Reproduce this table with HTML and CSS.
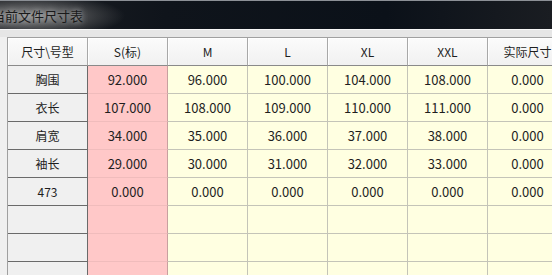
FILE: index.html
```html
<!DOCTYPE html>
<html lang="zh">
<head>
<meta charset="utf-8">
<link rel="stylesheet" href="styles.css">
</head>
<body>
<div class="window">
  <div class="titlebar"><span class="title">当前文件尺寸表</span></div>
  <div class="toolband"></div>
  <div class="content">
    <div class="grid">
      <div class="hd">尺寸\号型</div>
      <div class="hd">S(标)</div>
      <div class="hd">M</div>
      <div class="hd">L</div>
      <div class="hd">XL</div>
      <div class="hd">XXL</div>
      <div class="hd">实际尺寸</div>

      <div class="rh">胸围</div>
      <div class="c s">92.000</div>
      <div class="c">96.000</div>
      <div class="c">100.000</div>
      <div class="c">104.000</div>
      <div class="c">108.000</div>
      <div class="c">0.000</div>

      <div class="rh">衣长</div>
      <div class="c s">107.000</div>
      <div class="c">108.000</div>
      <div class="c">109.000</div>
      <div class="c">110.000</div>
      <div class="c">111.000</div>
      <div class="c">0.000</div>

      <div class="rh">肩宽</div>
      <div class="c s">34.000</div>
      <div class="c">35.000</div>
      <div class="c">36.000</div>
      <div class="c">37.000</div>
      <div class="c">38.000</div>
      <div class="c">0.000</div>

      <div class="rh">袖长</div>
      <div class="c s">29.000</div>
      <div class="c">30.000</div>
      <div class="c">31.000</div>
      <div class="c">32.000</div>
      <div class="c">33.000</div>
      <div class="c">0.000</div>

      <div class="rh">473</div>
      <div class="c s">0.000</div>
      <div class="c">0.000</div>
      <div class="c">0.000</div>
      <div class="c">0.000</div>
      <div class="c">0.000</div>
      <div class="c">0.000</div>

      <div class="rh"></div>
      <div class="c s"></div>
      <div class="c"></div>
      <div class="c"></div>
      <div class="c"></div>
      <div class="c"></div>
      <div class="c"></div>

      <div class="rh"></div>
      <div class="c s"></div>
      <div class="c"></div>
      <div class="c"></div>
      <div class="c"></div>
      <div class="c"></div>
      <div class="c"></div>

      <div class="rh"></div>
      <div class="c s"></div>
      <div class="c"></div>
      <div class="c"></div>
      <div class="c"></div>
      <div class="c"></div>
      <div class="c"></div>
    </div>
  </div>
</div>
</body>
</html>
```

FILE: styles.css
```css
html, body {
  margin: 0;
  padding: 0;
  width: 552px;
  height: 275px;
  overflow: hidden;
  background: #f0f0f0;
  font-family: "Noto Sans CJK SC", "Noto Sans", sans-serif;
}

.window {
  display: flex;
  flex-direction: column;
  width: 552px;
  height: 275px;
  overflow: hidden;
}

.titlebar {
  height: 28px;
  border-top: 1px solid #8c9096;
  background:
    radial-gradient(ellipse 95px 22px at 30px 15px, rgba(150,150,150,0.85), rgba(110,110,110,0.35) 70%, rgba(0,0,0,0) 100%),
    linear-gradient(90deg, #1c1f24 0%, #0f141b 30%, #0b1119 70%, #1a1d22 100%);
  display: flex;
  align-items: center;
  overflow: hidden;
  flex-shrink: 0;
}

.title {
  margin-left: -8px;
  font-size: 13px;
  color: #1a1a1a;
  text-shadow: 0 0 6px rgba(230,230,230,0.9);
  white-space: nowrap;
  letter-spacing: 0;
}

.toolband {
  height: 7px;
  border-top: 1px solid #f8f8f8;
  background: #e6e6e6;
  flex-shrink: 0;
}

.content {
  flex: 1;
  padding-left: 7px;
  background: #f0f0f0;
  overflow: hidden;
}

.grid {
  display: grid;
  grid-template-columns: 80px repeat(6, 80px);
  grid-auto-rows: 28px;
  border-left: 1px solid #a0a0a0;
  border-top: 1px solid #a0a0a0;
  width: max-content;
}

.grid > div {
  display: flex;
  align-items: center;
  justify-content: center;
  box-sizing: border-box;
  white-space: nowrap;
  color: #1e1e1e;
}

.hd {
  font-size: 12px;
  background: linear-gradient(#fbfbfb, #f1f1f1);
  border-right: 1px solid #a8a8a8;
  border-bottom: 1px solid #8a8a8a;
  box-shadow: inset 1px 1px 0 #ffffff;
}

.rh {
  font-size: 12px;
  background: #f0f0f0;
  border-right: 1px solid #6a6a6a;
  border-bottom: 1px solid #6a6a6a;
}

.c {
  font-size: 13px;
  background: #ffffe1;
  border-right: 1px solid #c4c4b8;
  border-bottom: 1px solid #c4c4b8;
}

.c.s {
  background: #ffc8c8;
  border-right-color: #c8a0a0;
  border-bottom-color: #f0bcbc;
}
```
